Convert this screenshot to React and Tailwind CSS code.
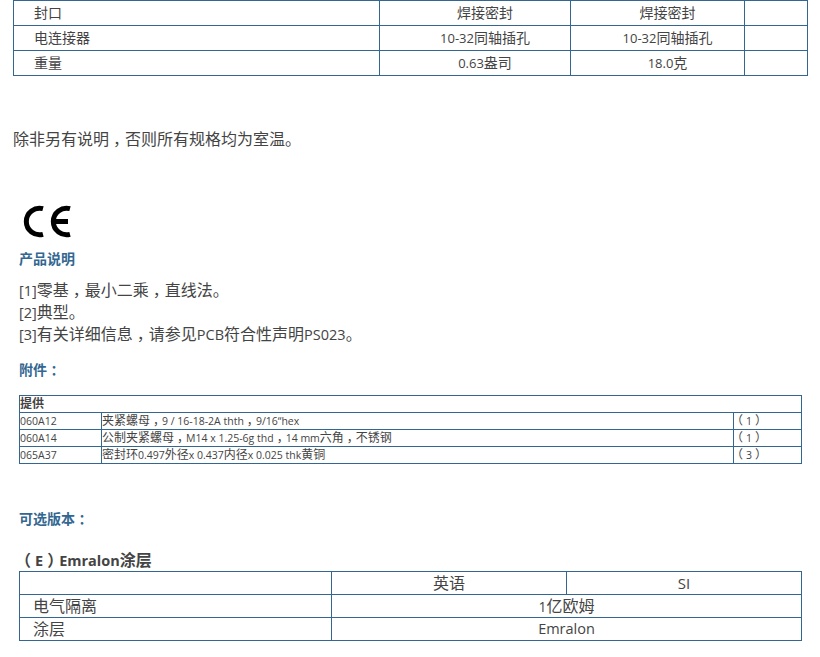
const FONT = "font-['Open_Sans','Noto_Sans_CJK_SC',sans-serif]";
const cell = "border border-[#336791]";
const heading = "ml-[19px] text-[14px] font-bold leading-[20px] text-[#336791]";

// the screenshot has Latin runs a size below the CJK, and centred punctuation
function Mix({ text, latin }) {
  const parts = text.split(/([\x20-\x7E“]+|[，（）：])/).filter(Boolean);
  return parts.map((p, i) => {
    if (/^[，（）：]$/.test(p)) return <span key={i} className="px-[0.25em] [font-feature-settings:'halt']">{p}</span>;
    if (/^[\x20-\x7E“]+$/.test(p)) return <span key={i} className={`${latin} leading-none`}>{p}</span>;
    return <span key={i}>{p}</span>;
  });
}

function CeMark() {
  return (
    <svg width="50" height="34" viewBox="0 0 50 34" fill="none" stroke="#000" strokeWidth="5" className="block">
      <path d="M21 3.7 A13.25 13.25 0 1 0 21 29.3" />
      <path d="M48 3.7 A13.25 13.25 0 1 0 48 29.3" />
      <path d="M32 16.5 H46" />
    </svg>
  );
}

function SpecTable() {
  const rows = [
    ["封口", "焊接密封", "焊接密封"],
    ["电连接器", "10-32同轴插孔", "10-32同轴插孔"],
    ["重量", "0.63盎司", "18.0克"],
  ];
  return (
    <table className="ml-[13px] w-[794px] table-fixed border-collapse text-[14px] text-[#444]">
      <colgroup>
        <col className="w-[366px]" />
        <col className="w-[191px]" />
        <col className="w-[174px]" />
        <col className="w-[63px]" />
      </colgroup>
      <tbody>
        {rows.map((r) => (
          <tr key={r[0]} className="h-[25px]">
            <td className={`${cell} pb-px pl-[20px]`}>{r[0]}</td>
            <td className={`${cell} pb-px pl-[20px] text-center`}><Mix text={r[1]} latin="text-[13px]" /></td>
            <td className={`${cell} pb-px pl-[20px] text-center`}><Mix text={r[2]} latin="text-[13px]" /></td>
            <td className={cell}></td>
          </tr>
        ))}
      </tbody>
    </table>
  );
}

function AccessoryTable() {
  const rows = [
    ["060A12", "夹紧螺母，9 / 16-18-2A thth，9/16“hex", "（1）"],
    ["060A14", "公制夹紧螺母，M14 x 1.25-6g thd，14 mm六角，不锈钢", "（1）"],
    ["065A37", "密封环0.497外径x 0.437内径x 0.025 thk黄铜", "（3）"],
  ];
  return (
    <table className="ml-[19px] mt-[15px] w-[782px] table-fixed border-collapse text-[12px] leading-[16px] text-[#444]">
      <colgroup>
        <col className="w-[82px]" />
        <col className="w-[632px]" />
        <col className="w-[68px]" />
      </colgroup>
      <tbody>
        <tr className="h-[17px]">
          <td colSpan={3} className={`${cell} font-bold`}>提供</td>
        </tr>
        {rows.map((r) => (
          <tr key={r[0]} className="h-[17px]">
            <td className={`${cell} text-[10.5px]`}>{r[0]}</td>
            <td className={cell}><Mix text={r[1]} latin="text-[10.5px]" /></td>
            <td className={cell}><Mix text={r[2]} latin="text-[10.5px]" /></td>
          </tr>
        ))}
      </tbody>
    </table>
  );
}

function CoatingTable() {
  return (
    <table className="ml-[19px] w-[782px] table-fixed border-collapse text-[16px] leading-[22px] text-[#444]">
      <colgroup>
        <col className="w-[312px]" />
        <col className="w-[235px]" />
        <col className="w-[235px]" />
      </colgroup>
      <tbody>
        <tr className="h-[23px]">
          <td className={cell}></td>
          <td className={`${cell} text-center`}>英语</td>
          <td className={`${cell} text-center text-[15px]`}>SI</td>
        </tr>
        <tr className="h-[23px]">
          <td className={`${cell} pl-[13px]`}>电气隔离</td>
          <td colSpan={2} className={`${cell} text-center`}><Mix text="1亿欧姆" latin="text-[14px]" /></td>
        </tr>
        <tr className="h-[23px]">
          <td className={`${cell} pl-[13px]`}>涂层</td>
          <td colSpan={2} className={`${cell} text-center text-[14.5px]`}>Emralon</td>
        </tr>
      </tbody>
    </table>
  );
}

export default function App() {
  return (
    <div className={`${FONT} h-[657px] w-[820px] overflow-hidden bg-white text-[#444]`}>
      <SpecTable />
      <p className="ml-[13px] mt-[51px] text-[16px] leading-[24px]"><Mix text="除非另有说明，否则所有规格均为室温。" /></p>
      <div className="ml-[22px] mt-[54px]">
        <CeMark />
      </div>
      <h4 className={`${heading} mt-[10px]`}>产品说明</h4>
      <div className="ml-[19px] mt-[10px] text-[16px] leading-[22px]">
        <p><Mix text="[1]零基，最小二乘，直线法。" latin="text-[14.5px]" /></p>
        <p><Mix text="[2]典型。" latin="text-[14.5px]" /></p>
        <p><Mix text="[3]有关详细信息，请参见PCB符合性声明PS023。" latin="text-[14.5px]" /></p>
      </div>
      <h4 className={`${heading} mt-[15px]`}><Mix text="附件：" /></h4>
      <AccessoryTable />
      <h4 className={`${heading} mt-[45px]`}><Mix text="可选版本：" /></h4>
      <h3 className="ml-[19px] mt-[21px] text-[16px] font-bold leading-[21px]"><Mix text="（E）Emralon涂层" latin="text-[14.5px]" /></h3>
      <CoatingTable />
    </div>
  );
}
